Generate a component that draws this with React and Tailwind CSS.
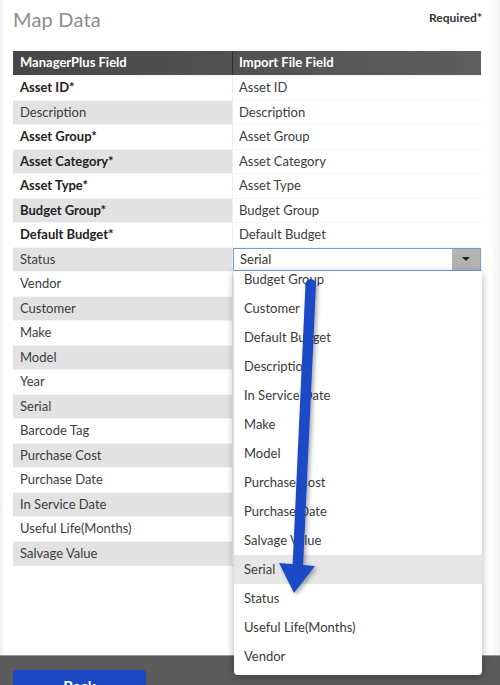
import React from "react";

const rows = [
  { label: "Asset ID*", value: "Asset ID", bold: true },
  { label: "Description", value: "Description" },
  { label: "Asset Group*", value: "Asset Group", bold: true },
  { label: "Asset Category*", value: "Asset Category", bold: true },
  { label: "Asset Type*", value: "Asset Type", bold: true },
  { label: "Budget Group*", value: "Budget Group", bold: true },
  { label: "Default Budget*", value: "Default Budget", bold: true },
  { label: "Status", value: "Serial", select: true },
  { label: "Vendor", value: "" },
  { label: "Customer", value: "" },
  { label: "Make", value: "" },
  { label: "Model", value: "" },
  { label: "Year", value: "" },
  { label: "Serial", value: "" },
  { label: "Barcode Tag", value: "" },
  { label: "Purchase Cost", value: "" },
  { label: "Purchase Date", value: "" },
  { label: "In Service Date", value: "" },
  { label: "Useful Life(Months)", value: "" },
  { label: "Salvage Value", value: "" },
];

const options = [
  "Budget Group",
  "Customer",
  "Default Budget",
  "Description",
  "In Service Date",
  "Make",
  "Model",
  "Purchase Cost",
  "Purchase Date",
  "Salvage Value",
  "Serial",
  "Status",
  "Useful Life(Months)",
  "Vendor",
];

const App = () => {
  return (
    <div
      className="relative w-[500px] h-[685px] overflow-hidden bg-white flex flex-col text-[#333]"
      style={{ fontFamily: "Lato, 'Open Sans', sans-serif" }}
    >
      <div className="relative flex-1 px-[13px]">
        {/* page edges */}
        <div className="absolute left-0 top-0 h-full w-[4px] bg-gradient-to-r from-[#ececec] to-white" />
        <div className="absolute right-0 top-0 h-full w-[10px] bg-gradient-to-l from-[#f1f1f1] to-white" />

        <div className="relative flex justify-between items-start pt-[6px] pr-[5px]">
          <h1 className="text-[20px] leading-[26px] text-[#8c8c8c] tracking-[0.2px]">Map Data</h1>
          <span className="text-[12px] font-bold mt-[3px] text-[#333]">Required*</span>
        </div>

        <div className="relative mt-[19px] w-[468px] border-b border-[#e8e8e8]">
          <div className="flex h-[24px] bg-gradient-to-r from-[#474747] to-[#5e5e5e] text-white text-[13px] font-bold">
            <div className="w-[220px] border-r border-[#2f2f2f] px-[7px] flex items-center">ManagerPlus Field</div>
            <div className="flex-1 px-[6px] flex items-center">Import File Field</div>
          </div>
          {rows.map((r, i) => (
            <div
              key={r.label}
              className={`flex h-[24.5px] text-[13px] border-t border-[#f4f4f4] ${
                i % 2 === 0 ? "bg-white" : "bg-[#e2e2e2]"
              }`}
            >
              <div
                className={`w-[220px] px-[7px] flex items-center border-r border-[#ececec] ${
                  r.bold ? "font-bold text-[#222]" : "text-[#3c3c3c]"
                }`}
              >
                {r.label}
              </div>
              <div className="flex-1 flex items-center bg-white">
                {r.select ? (
                  <div className="h-full w-full flex items-stretch border border-[#6f9fdb] bg-white">
                    <span className="flex-1 flex items-center px-[6px] text-[#333]">{r.value}</span>
                    <span className="w-[28px] bg-[#b3b3b3] flex items-center justify-center">
                      <span className="w-0 h-0 border-l-[4px] border-r-[4px] border-t-[4px] border-l-transparent border-r-transparent border-t-[#222]" />
                    </span>
                  </div>
                ) : (
                  <span className="px-[6px] text-[#3c3c3c]">{r.value}</span>
                )}
              </div>
            </div>
          ))}
        </div>
      </div>

      {/* bottom bar */}
      <div className="h-[30px] bg-[#5b5b5b] border-t border-[#999] px-[13px] pt-[14px]">
        <button className="w-[133px] h-[30px] bg-[#1c48c4] rounded-[3px] text-white text-[15px] font-bold leading-none flex justify-center items-start pt-[9px]">
          Back
        </button>
      </div>

      {/* open dropdown */}
      <div className="absolute left-[234px] top-[271px] w-[248px] h-[404px] bg-white rounded-b-[4px] shadow-[0_2px_8px_rgba(0,0,0,0.3)] overflow-hidden">
        <div className="mt-[-6px]">
          {options.map((o) => (
            <div
              key={o}
              className={`h-[29px] flex items-center px-[10px] text-[13px] text-[#3a3a3a] ${
                o === "Serial" ? "bg-[#e6e6e6]" : ""
              }`}
            >
              {o}
            </div>
          ))}
        </div>
      </div>

      {/* annotation arrow */}
      <svg className="absolute left-0 top-0 pointer-events-none" width="500" height="685">
        <defs>
          <filter id="sh" x="-50%" y="-50%" width="200%" height="200%">
            <feDropShadow dx="2" dy="2" stdDeviation="2" floodColor="#000" floodOpacity="0.35" />
          </filter>
        </defs>
        <g filter="url(#sh)" fill="#1b48c6">
          <path d="M305.5 284 L316 284.5 L303 568 L292.5 567.5 Z" />
          <path d="M279 563 L315 566 L294 593 Z" />
          <circle cx="310.7" cy="284.3" r="5.2" />
        </g>
      </svg>
    </div>
  );
};

export default App;
